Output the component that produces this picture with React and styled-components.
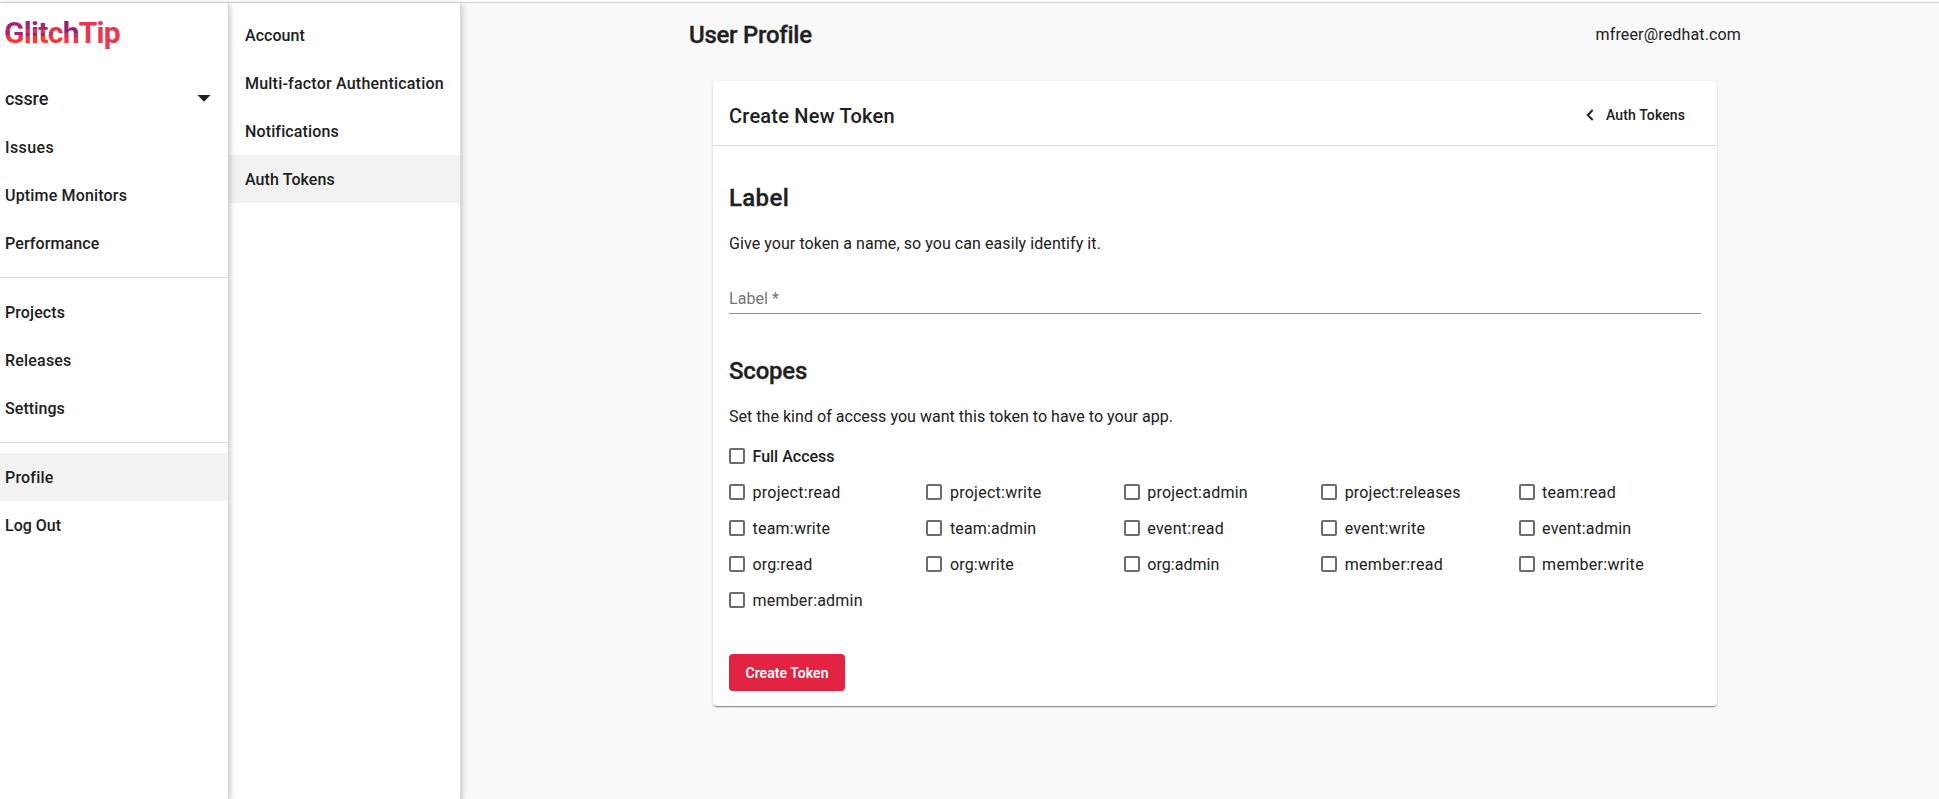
import React from "react";
import styled, { createGlobalStyle, css } from "styled-components";

const GlobalStyle = createGlobalStyle`
  * { box-sizing: border-box; }
  body {
    margin: 0;
    font-family: Roboto, "Liberation Sans", sans-serif;
    font-size: 16px;
    color: #202020;
    background: #f9f9f9;
  }
  h1, h2, h3, p { margin: 0; }
`;

const tracking = css`
  letter-spacing: ${(p) => p.$track || 0}px;
`;

const Page = styled.div`
  display: flex;
  flex-direction: column;
  height: 799px;
  overflow: hidden;
`;

const TopEdge = styled.div`
  flex: none;
  height: 3px;
  background: #fbfbfb;
  border-bottom: 1px solid #d5d5d5;
`;

const Columns = styled.div`
  display: flex;
  flex: 1;
`;

const Panel = styled.aside`
  position: relative;
  z-index: ${(p) => p.$level};
  flex: none;
  width: ${(p) => p.$width}px;
  padding-top: ${(p) => p.$top}px;
  background: #fff;
  border-right: 1px solid #d9d9d9;
  box-shadow: 1px 2px 6px rgba(0, 0, 0, 0.24);
`;

const Logo = styled.div`
  height: 72px;
  padding: 12px 0 0 4px;
  font-size: 30px;
  font-weight: 700;
  line-height: 36px;
  letter-spacing: -0.7px;
  color: #ea3650;
  white-space: nowrap;
`;

const glitchFills = {
  g: "#a5246d 0 13px, #c72b5e 13px 16px, #9d2470 16px 20px, #e5334f 20px 23px, #ff3630 23px",
  l: "#a5246d 0 14px, #dd3153 14px 18px, #9d2470 18px 21px, #ff3630 21px",
  c: "#e5334f 0 17px, #c42b60 17px 20px, #ff3630 20px",
  h: "#92236f 0 18px, #d42e57 18px 23px, #ff3630 23px",
};

const Glitch = styled.span`
  display: inline-block;
  background: linear-gradient(${(p) => glitchFills[p.$fill]});
  background-clip: text;
  -webkit-background-clip: text;
  color: transparent;
`;

const NavItem = styled.div`
  display: flex;
  align-items: center;
  justify-content: space-between;
  height: 48px;
  padding: 0 17px ${(p) => (p.$size ? 2 : 0)}px ${(p) => p.$indent}px;
  font-size: ${(p) => p.$size || 16}px;
  font-weight: 500;
  white-space: nowrap;
  background: ${(p) => (p.$active ? "#f2f2f2" : "transparent")};
  ${tracking}
`;

const Divider = styled.div`
  height: 1px;
  margin: 10px 0;
  background: #dadada;
`;

const Main = styled.main`
  width: 1052px;
  margin-left: 228px;
`;

const PageHeader = styled.header`
  display: flex;
  justify-content: space-between;
  height: 78px;
`;

const PageTitle = styled.h1`
  padding-top: 16px;
  font-size: 24px;
  font-weight: 500;
  line-height: 32px;
  -webkit-text-stroke: 0.3px;
  ${tracking}
`;

const Email = styled.span`
  padding-top: 20px;
  line-height: 24px;
  ${tracking}
`;

const Card = styled.section`
  height: 625px;
  margin: 0 24px;
  background: #fff;
  border-radius: 4px;
  box-shadow: 0 2px 1px -1px rgba(0, 0, 0, 0.2), 0 1px 1px rgba(0, 0, 0, 0.24),
    0 1px 3px rgba(0, 0, 0, 0.12);
`;

const CardHeader = styled.div`
  display: flex;
  align-items: center;
  justify-content: space-between;
  height: 65px;
  padding: 5px 32px 0 16px;
  border-bottom: 1px solid #d9d9d9;
`;

const CardTitle = styled.h2`
  font-size: 20px;
  font-weight: 500;
  line-height: 28px;
  ${tracking}
`;

const BackLink = styled.a`
  display: flex;
  align-items: center;
  gap: 12px;
  padding-bottom: 1px;
  font-size: 14px;
  font-weight: 500;
  ${tracking}
`;

const CardBody = styled.div`
  padding: 35px 16px 0;
`;

const SectionTitle = styled.h3`
  font-size: 24px;
  font-weight: 500;
  line-height: 34px;
  -webkit-text-stroke: 0.3px;
  ${tracking}
`;

const Hint = styled.p`
  margin-top: 17px;
  line-height: 24px;
  ${tracking}
`;

const LabelField = styled.div`
  height: 58px;
  margin-bottom: 40px;
  padding-top: 31px;
  line-height: 24px;
  color: #767676;
  border-bottom: 1px solid #8f8f8f;
  ${tracking}
`;

const ScopeGrid = styled.div`
  display: grid;
  grid-template-columns: repeat(5, 197.4px);
  grid-auto-rows: 36px;
  margin-top: 9px;
`;

const Scope = styled.label`
  display: flex;
  align-items: center;
  gap: 7.5px;
  grid-column: ${(p) => (p.$full ? "1 / -1" : "auto")};
  font-weight: ${(p) => (p.$full ? 500 : 400)};
  ${tracking}
`;

const Box = styled.span`
  flex: none;
  width: 16px;
  height: 16px;
  border: 2px solid #6c6c6c;
  border-radius: 2px;
`;

const SubmitButton = styled.button`
  display: block;
  width: 116px;
  height: 37px;
  margin-top: 36px;
  padding: 1px 0 0;
  border: 0;
  border-radius: 4px;
  background: #e22342;
  color: #fff;
  font: 600 14px Roboto, "Liberation Sans", sans-serif;
  ${tracking}
`;

const mainNav = [
  [["Issues", 0.4], ["Uptime Monitors", 0.17], ["Performance", 0.1]],
  [["Projects", 0.1], ["Releases", 0.2], ["Settings", 0.08]],
  [["Profile", 0.2], ["Log Out", 0]],
];

const profileNav = [
  ["Account", 0.05],
  ["Multi-factor Authentication", 0.21],
  ["Notifications", 0.13],
  ["Auth Tokens", 0.08],
];

const scopes = [
  ["project:read", 0.28], ["project:write", 0.26], ["project:admin", 0.22],
  ["project:releases", 0.19], ["team:read", 0.24], ["team:write", 0.22],
  ["team:admin", 0.15], ["event:read", 0.28], ["event:write", 0.27],
  ["event:admin", 0.22], ["org:read", 0.15], ["org:write", 0.2],
  ["org:admin", 0.03], ["member:read", 0.34], ["member:write", 0.29],
  ["member:admin", 0.2],
];

export default function App() {
  return (
    <>
      <GlobalStyle />
      <Page>
        <TopEdge />
        <Columns>
          <Panel $width={229} $top={0} $level={1}>
            <Logo>
              <Glitch $fill="g">G</Glitch>
              <Glitch $fill="l">lit</Glitch>
              <Glitch $fill="c">c</Glitch>
              <Glitch $fill="h">h</Glitch>Tip
            </Logo>
            <NavItem $indent={5} $size={18} $track={-0.1}>
              cssre
              <svg width="14" height="7" viewBox="0 0 14 7">
                <path d="M0.5 0h13L7 6.7z" fill="#202020" />
              </svg>
            </NavItem>
            {mainNav.map((group, i) => (
              <React.Fragment key={i}>
                {i > 0 && <Divider />}
                {group.map(([name, track]) => (
                  <NavItem key={name} $indent={5} $track={track} $active={name === "Profile"}>
                    {name}
                  </NavItem>
                ))}
              </React.Fragment>
            ))}
          </Panel>
          <Panel $width={232} $top={8} $level={0}>
            {profileNav.map(([name, track]) => (
              <NavItem key={name} $indent={16} $track={track} $active={name === "Auth Tokens"}>
                {name}
              </NavItem>
            ))}
          </Panel>
          <Main>
            <PageHeader>
              <PageTitle $track={-0.27}>User Profile</PageTitle>
              <Email $track={0.15}>mfreer@redhat.com</Email>
            </PageHeader>
            <Card>
              <CardHeader>
                <CardTitle $track={0.22}>Create New Token</CardTitle>
                <BackLink $track={0.11}>
                  <svg width="8" height="12" viewBox="0 0 8 12">
                    <path d="M6.7 1L1.7 6l5 5" fill="none" stroke="#202020" strokeWidth="1.9" />
                  </svg>
                  Auth Tokens
                </BackLink>
              </CardHeader>
              <CardBody>
                <SectionTitle $track={0.35}>Label</SectionTitle>
                <Hint $track={0.07}>Give your token a name, so you can easily identify it.</Hint>
                <LabelField $track={0.05}>Label *</LabelField>
                <SectionTitle $track={-0.2}>Scopes</SectionTitle>
                <Hint $track={0.035}>
                  Set the kind of access you want this token to have to your app.
                </Hint>
                <ScopeGrid>
                  <Scope $full $track={0}>
                    <Box />
                    Full Access
                  </Scope>
                  {scopes.map(([name, track]) => (
                    <Scope key={name} $track={track}>
                      <Box />
                      {name}
                    </Scope>
                  ))}
                </ScopeGrid>
                <SubmitButton $track={0.05}>Create Token</SubmitButton>
              </CardBody>
            </Card>
          </Main>
        </Columns>
      </Page>
    </>
  );
}
